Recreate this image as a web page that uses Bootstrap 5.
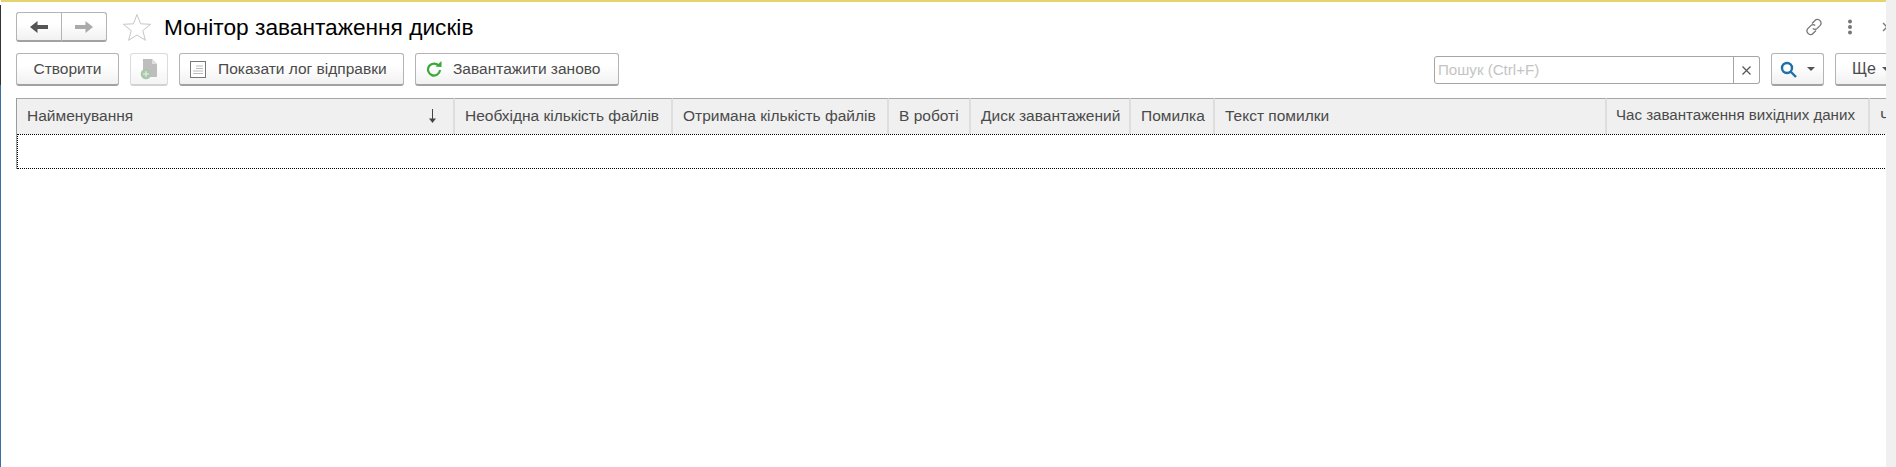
<!DOCTYPE html>
<html lang="uk">
<head>
<meta charset="utf-8">
<title>Монітор завантаження дисків</title>
<link href="https://cdn.jsdelivr.net/npm/bootstrap@5.3.0/dist/css/bootstrap.min.css" rel="stylesheet">
<style>
html,body{height:467px;overflow:hidden;background:#fff}
body{font-family:"Liberation Sans",Arial,sans-serif;font-size:15.5px;color:#4a4a4a}
.shell{height:467px;display:flex}
.edge{width:1px;flex:none;background:linear-gradient(#fff 0 5px,#333 5px 85px,#3a6ea5 85px)}
.frame{width:1885px;flex:none;overflow:hidden;border-top:2px solid #e6d36f;padding:10px 0 0 15px}
.gutter{flex:1;background:#f0f0f0}
.top-row{height:30px;margin-bottom:11px}
.ob-btn{height:33px;padding:0;font-size:15.5px;color:#4a4a4a;background:linear-gradient(#fff 40%,#f1f1f1);border:1px solid #b4b4b4;border-bottom:2px solid #a2a2a2;border-radius:3px;display:inline-flex;align-items:center;justify-content:center;flex:none;--bs-btn-hover-color:#4a4a4a;--bs-btn-hover-bg:#f4f4f4;--bs-btn-hover-border-color:#b4b4b4}
.nav-group{height:30px;width:92px;flex:none}
.nav-group .ob-btn{height:30px;width:46px;flex:none}
.nav-group .ob-btn:first-child{border-right:1px solid #c8c8c8}
.star-mark{margin:0 12px 0 14px;flex:none}
.page-title{font-size:22.700px;font-weight:400;color:#000;margin:0;line-height:30px}
.head-tools{gap:23px;margin-left:auto;margin-right:-6px;color:#777;flex:none}
.close-mark{margin-left:6px}
.tool-row{height:33px;margin-bottom:12px}
.create-btn{width:103px;margin-right:11px}
.doc-btn{width:38px;margin-right:11px;opacity:.75;border-color:#d0d0d0;border-bottom-color:#c4c4c4}
.log-btn{width:225px;margin-right:11px;gap:12px;justify-content:flex-start;padding-left:10px}
.reload-btn{width:204px;gap:11px;justify-content:flex-start;padding-left:10px}
.search-group{width:326px;height:28px;margin:3px 11px 0 auto;flex:none;flex-wrap:nowrap}
.search-group .form-control{height:28px;font-size:15.1px;padding:0 3px 1px;border:1px solid #a5a5a5;border-radius:3px 0 0 3px;box-shadow:none;font-family:inherit}
.search-group .form-control::placeholder{color:#c4c4c4}
.search-group .clear-btn{width:27px;height:28px;flex:none;padding:0;margin-left:0;border:1px solid #a5a5a5;border-left:0;border-radius:0 3px 3px 0;background:#fff;display:flex;align-items:center;justify-content:center}
.find-btn{width:53px;margin-right:11px;gap:10px}
.more-btn{width:66px;margin-right:-15px;flex:none;justify-content:flex-start;padding-left:16px;gap:6px;font-size:16px}
.caret-mark{width:0;height:0;border:4px solid transparent;border-top-color:#555;border-bottom:0}
.list-wrap{border-left:1px solid #9c9c9c;width:1900px}
.list-table{table-layout:fixed;width:1900px;margin:0;border-collapse:separate;border-spacing:0;--bs-table-bg:transparent}
.list-table th{height:36px;padding:0 0 2px 10px;background:#f0f0f0;border-top:1px solid #a6a6a6;border-bottom:0;border-right:2px solid #dedede;font-weight:400;font-size:15.5px;color:#4a4a4a;white-space:nowrap;overflow:hidden;vertical-align:middle}
.list-table th.w8{font-size:15.1px;padding-left:9px}
.list-table td{height:35px;padding:0;border:0;border-top:1px dotted #000;border-bottom:1px dotted #000;border-left:1px dotted #000}
.w1{width:438px}.w2{width:218px}.w3{width:216px}.w4{width:82px}.w5{width:160px}.w6{width:84px}.w7{width:392px}.w8{width:263px}.w9{width:47px}
.name-head{display:flex;justify-content:space-between;align-items:center;padding-right:16px}
</style>
</head>
<body>
<div class="shell">
  <div class="edge"></div>
  <div class="frame">
    <div class="top-row d-flex align-items-center">
      <div class="btn-group nav-group">
        <button class="btn ob-btn" type="button" aria-label="Назад"><svg width="18" height="14" viewBox="0 0 18 14"><path d="M0 7 7.500 1v4H18v4H7.500v4z" fill="#555"/></svg></button>
        <button class="btn ob-btn" type="button" aria-label="Вперед"><svg width="18" height="14" viewBox="0 0 18 14"><path d="M18 7 10.500 1v4H0v4h10.500v4z" fill="#aaa"/></svg></button>
      </div>
      <svg class="star-mark" width="30" height="29" viewBox="0 0 30 29"><path d="M15 1.500l3.600 9.300 10 .5-7.800 6.300 2.600 9.700L15 22l-8.400 5.300 2.600-9.700-7.800-6.300 10-.5z" fill="#fff" stroke="#c6c6c6"/></svg>
      <h1 class="page-title">Монітор завантаження дисків</h1>
      <div class="head-tools d-flex align-items-center">
        <svg width="20" height="20" viewBox="0 0 20 20" fill="none" stroke="#777" stroke-width="1.300"><path d="M8 6.500 11 3.500a3.300 3.300 0 0 1 5 .2 3.300 3.300 0 0 1 .2 4.700l-3 3a3.300 3.300 0 0 1-4.400.100"/><path d="M12 13.500 9 16.500a3.300 3.300 0 0 1-5-.2 3.300 3.300 0 0 1-.2-4.700l3-3a3.300 3.300 0 0 1 4.400-.1"/></svg>
        <svg width="6" height="16" viewBox="0 0 6 16" fill="#777"><circle cx="3" cy="2.500" r="2"/><circle cx="3" cy="8" r="2"/><circle cx="3" cy="13.500" r="2"/></svg>
        <svg class="close-mark" width="10" height="10" viewBox="0 0 10 10" stroke="#777" stroke-width="1.300"><path d="M1 1l8 8M9 1l-8 8"/></svg>
      </div>
    </div>
    <div class="tool-row d-flex align-items-start">
      <button class="btn ob-btn create-btn" type="button">Створити</button>
      <button class="btn ob-btn doc-btn" type="button" aria-label="Створити копію"><svg width="18" height="22" viewBox="0 0 18 22"><path d="M3 1h9l5 5v13H3z" fill="#a9a9a9"/><path d="M12 1l5 5h-5z" fill="#d5d5d5"/><circle cx="6" cy="16" r="5.300" fill="#8fb38f"/><path d="M6 13v6M3 16h6" stroke="#e8f0e8"/></svg></button>
      <button class="btn ob-btn log-btn" type="button"><svg width="16" height="17" viewBox="0 0 16 17"><rect x=".5" y=".5" width="15" height="16" fill="#fff" stroke="#777"/><path d="M6 5h7M6 7.500h7M3 10h10M3 12.500h10" stroke="#bbb"/></svg>Показати лог відправки</button>
      <button class="btn ob-btn reload-btn" type="button"><svg width="16" height="16" viewBox="0 0 16 16"><path d="M13 5.200A6 6 0 1 0 14 9" fill="none" stroke="#39a935" stroke-width="2.200"/><path d="M9.500 5.500 15.500 6V0z" fill="#39a935"/></svg>Завантажити заново</button>
      <div class="input-group search-group">
        <input class="form-control" type="text" placeholder="Пошук (Ctrl+F)" aria-label="Пошук">
        <button class="clear-btn" type="button" aria-label="Очистити"><svg width="9" height="9" viewBox="0 0 9 9" stroke="#555" stroke-width="1.200"><path d="M.5.500l8 8M8.500.500l-8 8"/></svg></button>
      </div>
      <button class="btn ob-btn find-btn" type="button" aria-label="Знайти"><svg width="17" height="17" viewBox="0 0 17 17" fill="none" stroke="#1f6fa8" stroke-width="2.400"><circle cx="7" cy="7" r="5"/><path d="M10.500 10.500 16 16"/></svg><span class="caret-mark"></span></button>
      <button class="btn ob-btn more-btn" type="button">Ще<span class="caret-mark"></span></button>
    </div>
    <div class="list-wrap">
      <table class="table list-table">
        <thead><tr>
          <th class="w1"><div class="name-head"><span>Найменування</span><svg width="9" height="14" viewBox="0 0 9 14"><path d="M4.500 0v11" stroke="#444"/><path d="M1 9.500h7L4.500 14z" fill="#444"/></svg></div></th>
          <th class="w2">Необхідна кількість файлів</th>
          <th class="w3">Отримана кількість файлів</th>
          <th class="w4">В роботі</th>
          <th class="w5">Диск завантажений</th>
          <th class="w6">Помилка</th>
          <th class="w7">Текст помилки</th>
          <th class="w8">Час завантаження вихідних даних</th>
          <th class="w9">Час</th>
        </tr></thead>
        <tbody><tr><td colspan="9"></td></tr></tbody>
      </table>
    </div>
  </div>
  <div class="gutter"></div>
</div>
<script src="https://cdn.jsdelivr.net/npm/bootstrap@5.3.0/dist/js/bootstrap.bundle.min.js"></script>
</body>
</html>
